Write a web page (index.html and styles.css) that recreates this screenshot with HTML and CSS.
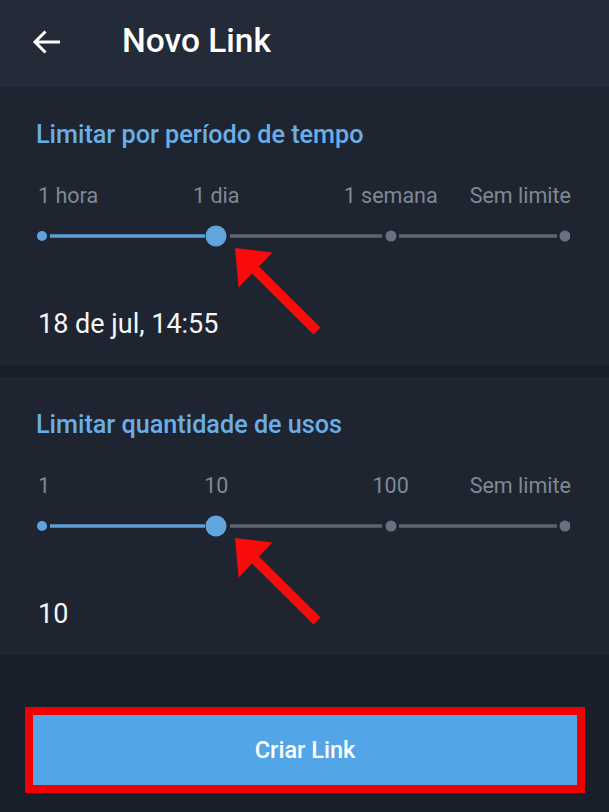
FILE: index.html
```html
<!DOCTYPE html>
<html lang="pt">

<head>
    <meta charset="UTF-8">
    <meta name="viewport" content="width=device-width, initial-scale=1.0">
    <title>Novo Link</title>
    <link rel="stylesheet" href="styles.css">
</head>

<body>
    <nav class="topbar">
        <svg class="back" width="30" height="24" viewBox="0 0 30 24">
            <path d="M28 12H3M13.5 1.5L3 12l10.5 10.5" fill="none" stroke="#fff" stroke-width="3" />
        </svg>
        <h1>Novo Link</h1>
    </nav>

    <main>
        <div class="section">
            <h2>Limitar por período de tempo</h2>
            <div class="labels">
                <span class="first">1 hora</span>
                <span class="second">1 dia</span>
                <span class="third">1 semana</span>
                <span class="last">Sem limite</span>
            </div>
            <svg class="track" width="533" height="24" viewBox="0 0 533 24">
                <line x1="13" y1="12" x2="168" y2="12" stroke="#5d9fd6" stroke-width="3.5" />
                <line x1="193" y1="12" x2="345" y2="12" stroke="#5a6673" stroke-width="3.5" />
                <line x1="362" y1="12" x2="520" y2="12" stroke="#5a6673" stroke-width="3.5" />
                <circle cx="5" cy="12" r="5" fill="#5fa3dc" />
                <circle cx="179" cy="12" r="10.5" fill="#62a5dd" />
                <circle cx="354" cy="12" r="5.5" fill="#66727f" />
                <circle cx="528" cy="12" r="5.5" fill="#66727f" />
            </svg>
            <p class="value">18 de jul, 14:55</p>
            <svg class="pointer" width="100" height="100" viewBox="225 240 100 100">
                <polygon points="235,248 272.4,252.4 259,266.4 320.5,327.4 313.5,334.6 252,273.6 238.6,287.6" fill="#f70b0b" />
            </svg>
        </div>

        <div class="section">
            <h2>Limitar quantidade de usos</h2>
            <div class="labels">
                <span class="first">1</span>
                <span class="second">10</span>
                <span class="third">100</span>
                <span class="last">Sem limite</span>
            </div>
            <svg class="track" width="533" height="24" viewBox="0 0 533 24">
                <line x1="13" y1="12" x2="168" y2="12" stroke="#5d9fd6" stroke-width="3.5" />
                <line x1="193" y1="12" x2="345" y2="12" stroke="#5a6673" stroke-width="3.5" />
                <line x1="362" y1="12" x2="520" y2="12" stroke="#5a6673" stroke-width="3.5" />
                <circle cx="5" cy="12" r="5" fill="#5fa3dc" />
                <circle cx="179" cy="12" r="10.5" fill="#62a5dd" />
                <circle cx="354" cy="12" r="5.5" fill="#66727f" />
                <circle cx="528" cy="12" r="5.5" fill="#66727f" />
            </svg>
            <p class="value">10</p>
            <svg class="pointer" width="100" height="100" viewBox="225 240 100 100">
                <polygon points="235,248 272.4,252.4 259,266.4 320.5,327.4 313.5,334.6 252,273.6 238.6,287.6" fill="#f70b0b" />
            </svg>
        </div>

        <div class="actions">
            <button type="button" class="create">Criar Link</button>
        </div>
    </main>
</body>

</html>
```

FILE: styles.css
```css
* {
    box-sizing: border-box;
    margin: 0;
    padding: 0;
}

body {
    width: 609px;
    height: 812px;
    overflow: hidden;
    background-color: #181f28;
    font-family: Roboto, 'Noto Sans', sans-serif;
}

.topbar {
    display: flex;
    align-items: center;
    height: 87px;
    padding: 0 0 6px 32px;
    background-color: #222b37;
}

.back {
    display: block;
    margin-top: 2px;
}

h1 {
    margin-left: 60px;
    color: #ffffff;
    font-size: 33.5px;
    font-weight: 500;
    line-height: 40px;
}

main {
    display: flex;
    flex-direction: column;
    gap: 12px;
}

.section {
    position: relative;
    display: flex;
    flex-direction: column;
    height: 278px;
    padding: 34px 39px 0 36px;
    background-color: #1e2531;
}

h2 {
    color: #6aaee8;
    font-size: 25.2px;
    font-weight: 500;
    line-height: 28px;
}

.labels {
    display: grid;
    grid-template-columns: repeat(6, 1fr);
    margin: 34px 5px 0 6px;
    color: #7f8993;
    font-size: 21.5px;
    line-height: 26px;
    white-space: nowrap;
}

.labels span {
    grid-row: 1;
}

.labels .first {
    grid-column: 1 / 3;
    justify-self: start;
    margin-left: -4px;
}

.labels .second {
    grid-column: 2 / 4;
    justify-self: center;
}

.labels .third {
    grid-column: 4 / 6;
    justify-self: center;
}

.labels .last {
    grid-column: 5 / 7;
    justify-self: end;
    margin-right: -6px;
}

.track {
    display: block;
    margin-top: 15px;
    margin-left: 1px;
}

.value {
    margin-top: 61px;
    margin-left: 2px;
    color: #f4f6f8;
    font-size: 27px;
    line-height: 30px;
}

.pointer {
    position: absolute;
    left: 225px;
    top: 153px;
    pointer-events: none;
}

.actions {
    padding: 40px 24px 0 25px;
}

.create {
    width: 560px;
    height: 86px;
    border: 8px solid #f20000;
    background-color: #52a6e8;
    color: #ffffff;
    font-family: Roboto, 'Noto Sans', sans-serif;
    font-size: 23.5px;
    font-weight: 500;
}
```
